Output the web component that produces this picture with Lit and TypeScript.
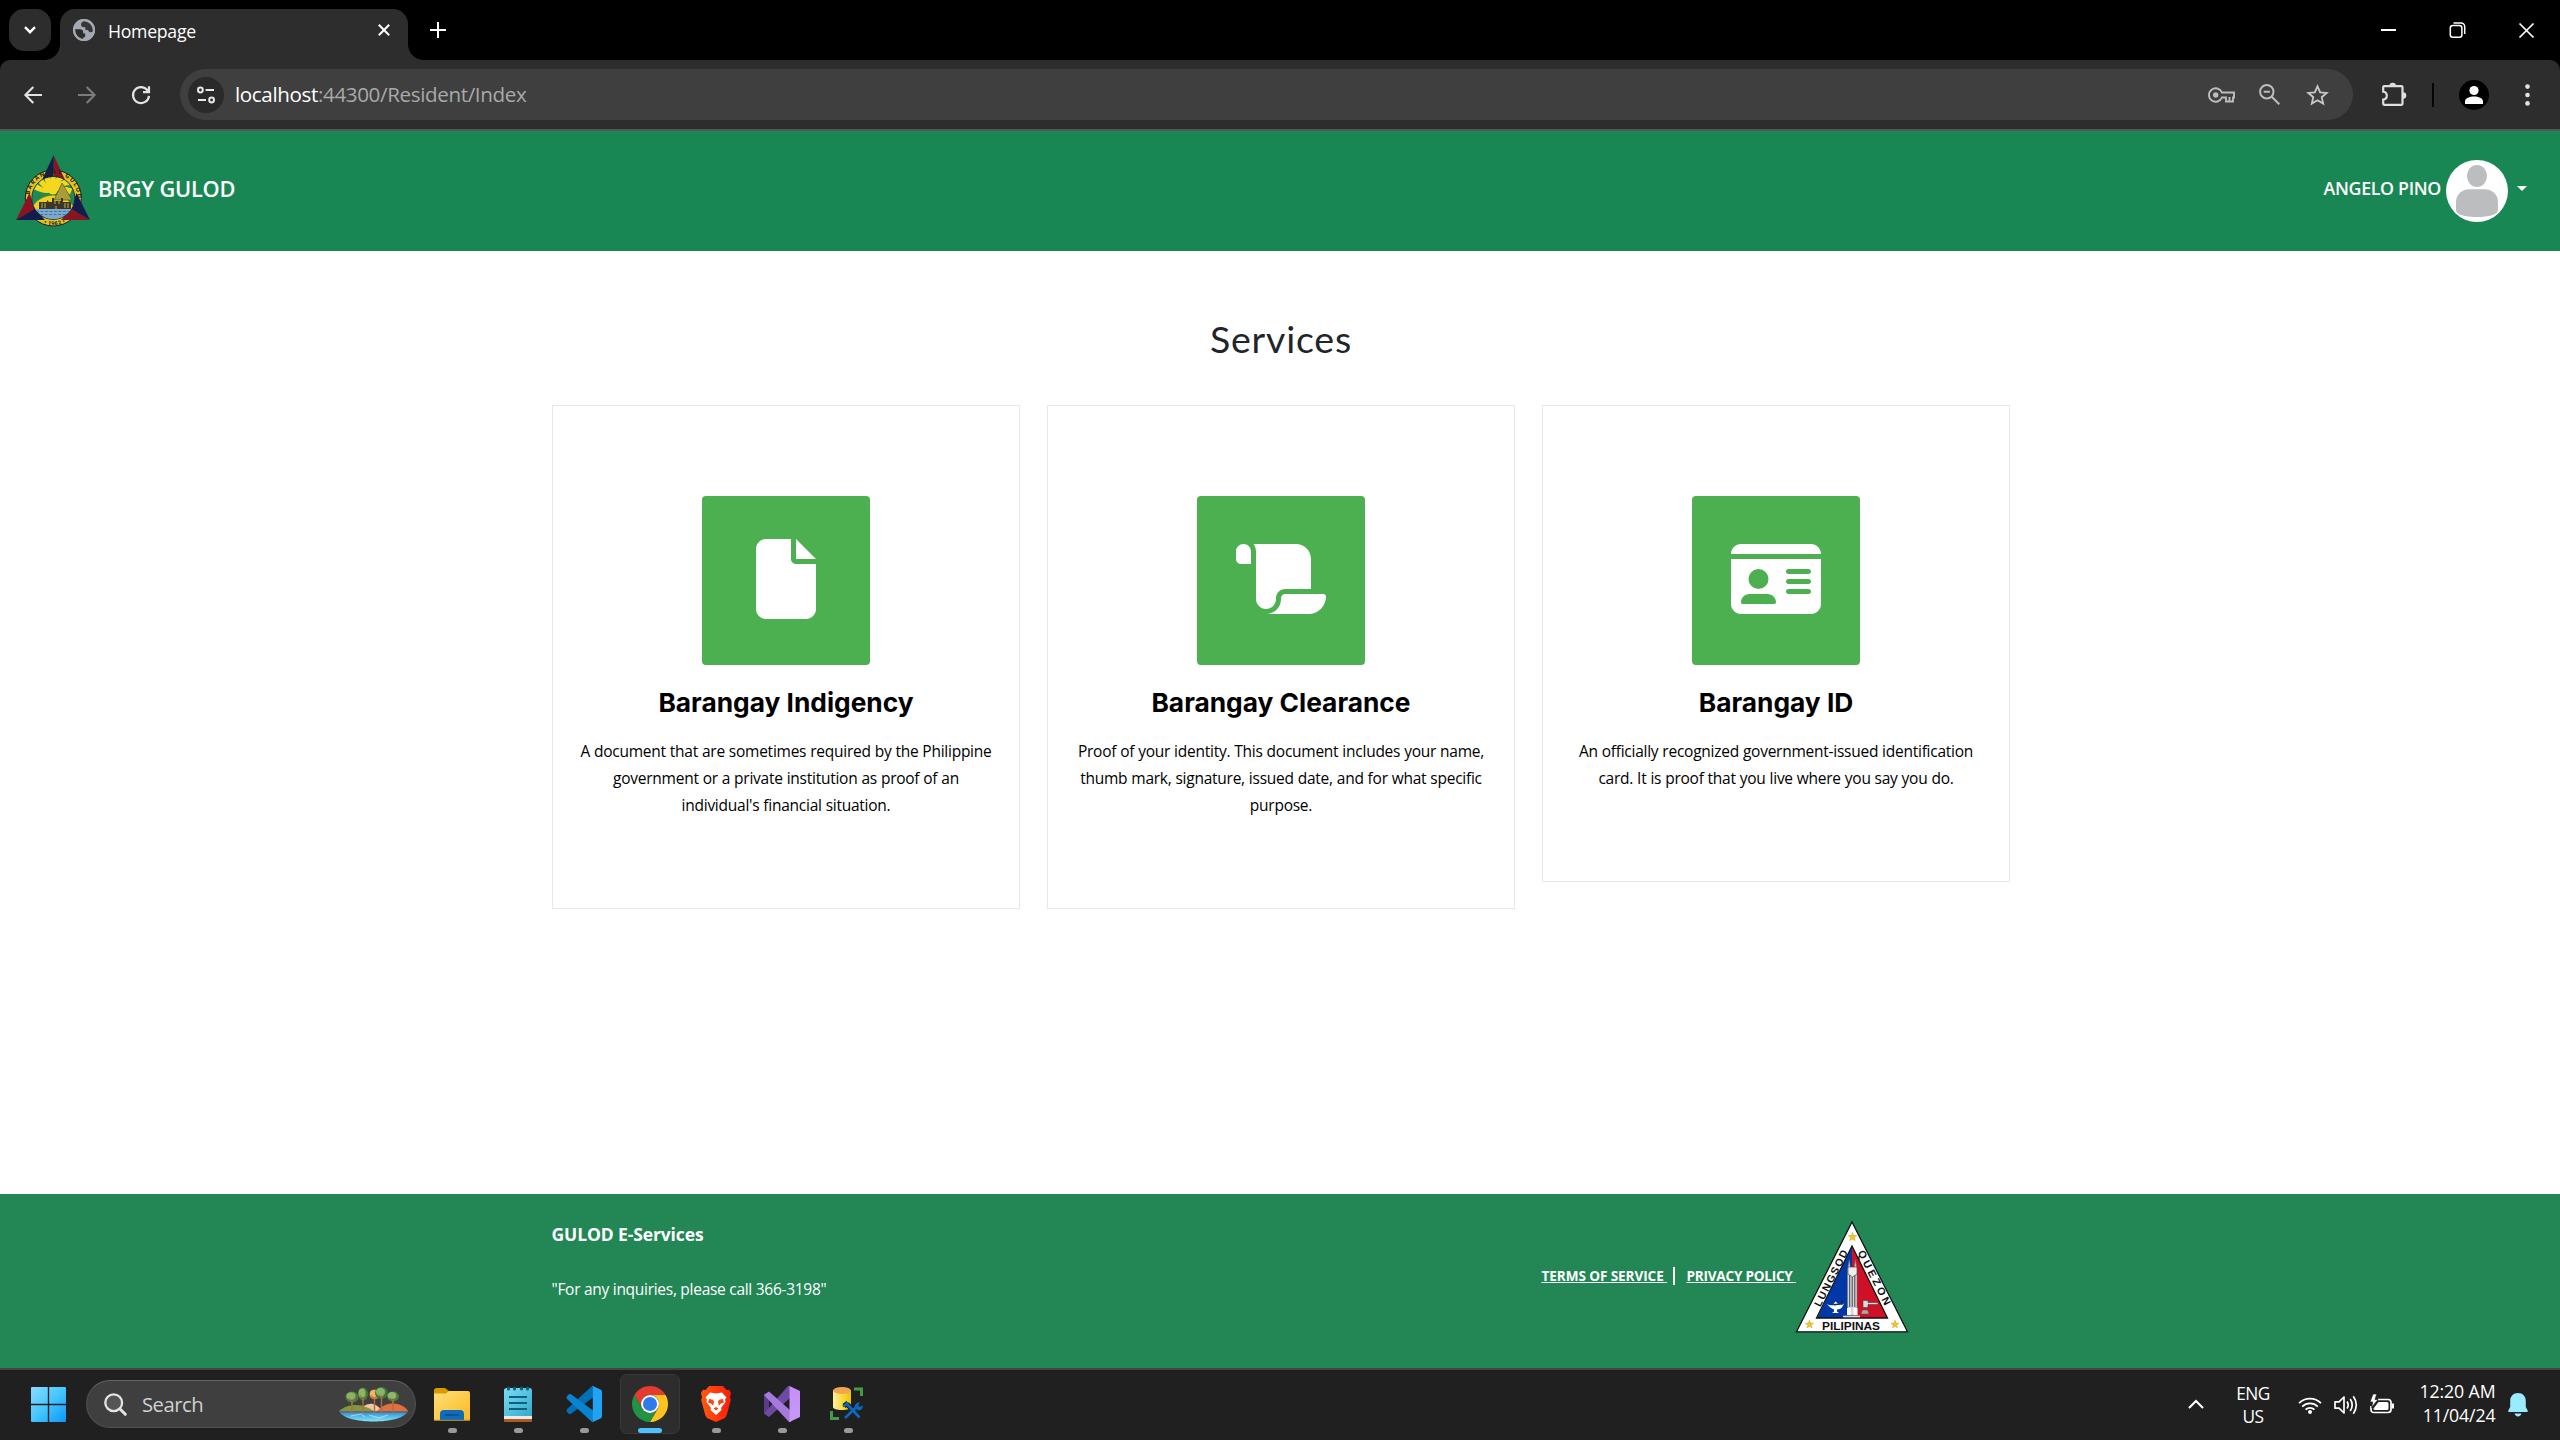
import { LitElement, html, svg, css } from "lit";
import { customElement } from "lit/decorators.js";
import { classMap } from "lit/directives/class-map.js";

interface Service {
  title: string;
  lines: string[];
  iconWidth: number;
  path: string;
}

const SERVICES: Service[] = [
  {
    title: "Barangay Indigency",
    lines: [
      "A document that are sometimes required by the Philippine",
      "government or a private institution as proof of an",
      "individual's financial situation.",
    ],
    iconWidth: 384,
    path: "M0 64C0 28.7 28.7 0 64 0H224V128c0 17.7 14.3 32 32 32H384V448c0 35.3-28.7 64-64 64H64c-35.3 0-64-28.7-64-64V64zm384 64H256V0L384 128z",
  },
  {
    title: "Barangay Clearance",
    lines: [
      "Proof of your identity. This document includes your name,",
      "thumb mark, signature, issued date, and for what specific",
      "purpose.",
    ],
    iconWidth: 576,
    path: "M0 80v48c0 17.7 14.3 32 32 32H48 96V80c0-26.5-21.5-48-48-48S0 53.5 0 80zM112 32c10 13.4 16 30 16 48V384c0 35.3 28.7 64 64 64s64-28.7 64-64v-5.3c0-32.4 26.3-58.7 58.7-58.7H480V128c0-53-43-96-96-96H112zM464 480c61.9 0 112-50.1 112-112c0-8.8-7.2-16-16-16H314.7c-14.7 0-26.7 11.9-26.7 26.7V384c0 53-43 96-96 96H368h96z",
  },
  {
    title: "Barangay ID",
    lines: [
      "An officially recognized government-issued identification",
      "card. It is proof that you live where you say you do.",
    ],
    iconWidth: 576,
    path: "M0 96l576 0c0-35.3-28.7-64-64-64H64C28.7 32 0 60.7 0 96zm0 32V416c0 35.3 28.7 64 64 64H512c35.3 0 64-28.7 64-64V128H0zM64 405.3c0-29.5 23.9-53.3 53.3-53.3H234.7c29.5 0 53.3 23.9 53.3 53.3c0 5.9-4.8 10.7-10.7 10.7H74.7c-5.9 0-10.7-4.8-10.7-10.7zM176 192a64 64 0 1 1 0 128 64 64 0 1 1 0-128zm176 16c0-8.8 7.2-16 16-16H496c8.8 0 16 7.2 16 16s-7.2 16-16 16H368c-8.8 0-16-7.2-16-16zm0 64c0-8.8 7.2-16 16-16H496c8.8 0 16 7.2 16 16s-7.2 16-16 16H368c-8.8 0-16-7.2-16-16zm0 64c0-8.8 7.2-16 16-16H496c8.8 0 16 7.2 16 16s-7.2 16-16 16H368c-8.8 0-16-7.2-16-16z",
  },
];

const STAR = "M0-10 2.6-3.2 9.5-3.1 4 1.3 5.9 8.1 0 4.2-5.9 8.1-4 1.3-9.5-3.1-2.6-3.2z";

/* ---------- Browser window frame ---------- */

@customElement("browser-chrome")
class BrowserChrome extends LitElement {
  static styles = css`
    :host { display: block; background: #000; font-family: "Open Sans", "Noto Sans", sans-serif; }
    svg { display: block; flex: none; overflow: visible; }
    .strip { height: 60px; display: flex; align-items: flex-start; padding-left: 9px; }
    .drop { width: 42px; height: 42px; margin: 9px 9px 0 0; border-radius: 15px; background: #2d2d2d; display: grid; place-items: center; }
    .tab { position: relative; box-sizing: border-box; width: 348px; height: 51px; margin-top: 9px; border-radius: 15px 15px 0 0; background: #2d2d2d; display: flex; align-items: center; padding: 0 18px 9px 13px; }
    .tab::before, .tab::after { content: ""; position: absolute; bottom: 0; width: 15px; height: 15px; }
    .tab::before { left: -15px; background: radial-gradient(circle at 0 0, transparent 14.5px, #2d2d2d 15px); }
    .tab::after { right: -15px; background: radial-gradient(circle at 100% 0, transparent 14.5px, #2d2d2d 15px); }
    .title { flex: 1; margin: 1px 0 0 13px; font-size: 17.7px; line-height: 24px; letter-spacing: -0.29px; color: #fff; }
    .plus { margin: 22px 0 0 21.5px; }
    .window { margin: 0 -1px 0 auto; display: flex; height: 60px; }
    .window span { width: 69px; display: grid; place-items: center; }
    .bar { box-sizing: border-box; height: 71px; border-bottom: 2px solid #555; border-radius: 10px 10px 0 0; background: #2d2d2d; display: flex; align-items: center; padding: 0 24px; }
    .omni { flex: none; box-sizing: border-box; width: 2173px; height: 51px; border-radius: 25.5px; background: #3f3f3f; display: flex; align-items: center; padding: 0 24px 0 7.5px; margin-left: 30px; }
    .info { width: 36px; height: 36px; border-radius: 50%; background: #2a2a2a; display: grid; place-items: center; margin-right: 11.5px; }
    .url { flex: 1; margin-bottom: 2px; font-size: 20.6px; line-height: 30px; letter-spacing: -0.37px; color: #a9a9a9; }
    .url b { font-weight: 400; color: #fff; }
    .gap-36 { margin-left: 36px; }
    .gap-24 { margin-left: 24px; }
    .gap-26 { margin-left: 26px; }
    .ext { margin: 0 0 2px 29px; }
    .sep { width: 2px; height: 24px; background: #050505; margin: 0 25px 0 26px; }
    .dots { margin-left: 36px; }
  `;

  render() {
    return html`
      <div class="strip">
        <div class="drop">
          <svg width="12" height="8" viewBox="0 0 12 8"><path d="M1 1.2l5 5 5-5" fill="none" stroke="#fff" stroke-width="2.4" /></svg>
        </div>
        <div class="tab">
          <svg width="22" height="22" viewBox="0 0 22 22">
            <circle cx="11" cy="11" r="11" fill="#a3a9b2" />
            <path d="M2.2 10.2h4.6c2.2 0 3.4 1 3.4 2.8v1.4h2v2c0 1.5-.8 2.2-2 2.2v1.6C5 20 1.6 15.5 2.2 10.200z" fill="#2d2d2d" />
            <path d="M11.5 2.2c-2 0-3.5 1.5-3.5 3.400 0 2 1.5 2.7 3 2.7h1.4v2.6h2.3l2 2.4 3-.2c1-5.3-2.7-10.2-8.2-10.900z" fill="#2d2d2d" opacity=".92" />
            <circle cx="11" cy="11" r="10" fill="none" stroke="#a3a9b2" stroke-width="2" />
          </svg>
          <span class="title">Homepage</span>
          <svg width="12" height="12" viewBox="0 0 12 12"><path d="M.8.8l10.4 10.4M11.2.8L.8 11.2" stroke="#fff" stroke-width="2" /></svg>
        </div>
        <svg class="plus" width="16" height="16" viewBox="0 0 16 16"><path d="M8 0v16M0 8h16" stroke="#fff" stroke-width="2" /></svg>
        <div class="window">
          <span><svg width="15" height="2"><rect width="15" height="2" fill="#fff" /></svg></span>
          <span>
            <svg width="16" height="16" viewBox="0.5 0 16 16" fill="none" stroke="#fff" stroke-width="1.5">
              <rect x=".8" y="3.6" width="11.6" height="11.6" rx="2.5" />
              <path d="M4 1h7.5A3.8 3.8 0 0 1 15.2 4.8V12" />
            </svg>
          </span>
          <span><svg width="15" height="15" viewBox="0 0 15 15"><path d="M.5.5l14 14M14.5.5l-14 14" stroke="#fff" stroke-width="1.7" /></svg></span>
        </div>
      </div>
      <div class="bar">
        <svg width="18" height="18" viewBox="0 0 18 18" fill="none" stroke="#e3e3e3" stroke-width="2.1"><path d="M18 9H1.6M9.3 1L1.4 9l7.9 8" /></svg>
        <svg class="gap-36" width="18" height="18" viewBox="0 0 18 18" fill="none" stroke="#7c7c7c" stroke-width="2.1"><path d="M0 9h16.4M8.7 1l7.9 8-7.9 8" /></svg>
        <svg class="gap-36" width="18" height="18" viewBox="0 0 18 18" fill="none" stroke="#e3e3e3" stroke-width="2.2"><path d="M15.8 4.8A8 8 0 1 0 17 9.8M17 .2v5.9h-6" /></svg>
        <div class="omni">
          <span class="info">
            <svg width="18" height="18" viewBox="0 0 18 18" fill="none" stroke="#e8e8e8" stroke-width="2"><circle cx="3.4" cy="4" r="2.4" /><path d="M8.6 4H17M1 14h8" /><circle cx="14.6" cy="14" r="2.4" /></svg>
          </span>
          <span class="url"><b>localhost</b>:44300/Resident/Index</span>
          <svg width="27" height="16" viewBox="0 0 27 16" fill="none" stroke="#bdbdbd" stroke-width="1.9">
            <circle cx="7.7" cy="8" r="2.7" fill="#bdbdbd" stroke="none" />
            <path d="M13.9 5.5A6.7 6.7 0 1 0 13.9 10.5H18V14.5H25V10.5H26V5.5zM21.5 14v-4" />
          </svg>
          <svg class="gap-24" width="21" height="21" viewBox="0 0 21 21" fill="none" stroke="#bdbdbd" stroke-width="2"><circle cx="7.8" cy="7.8" r="6.7" /><path d="M12.7 12.7l7.6 7.6M4.7 7.8h6.2" /></svg>
          <svg class="gap-26" width="23" height="22" viewBox="0 0 23 22" fill="none" stroke="#c8c8c8" stroke-width="1.8"><path d="M11.5 2.3l2.7 6 6.5.6-5 4.3 1.5 6.4-5.7-3.4-5.7 3.4 1.5-6.4-5-4.3 6.5-.6z" /></svg>
        </div>
        <svg class="ext" width="24" height="24" viewBox="0 0 24 24">
          <path d="M3 4.2H19.5Q20.5 4.2 20.5 5.2V21.8Q20.5 22.8 19.5 22.8H2.2Q1.2 22.8 1.2 21.8V17.5C6 17.5 6 9.7 1.2 9.7V5.2Q1.2 4.2 2.2 4.2z" fill="none" stroke="#dedede" stroke-width="2.2" />
          <path d="M7.4 4a3.3 3.3 0 0 1 6.6 0zM21 10.2a3.3 3.3 0 0 1 0 6.6z" fill="#dedede" />
        </svg>
        <span class="sep"></span>
        <svg width="30" height="30" viewBox="0 0 30 30"><circle cx="15" cy="15" r="15" fill="#000" /><circle cx="15" cy="10.5" r="4.6" fill="#fff" /><path d="M6 24v-2.5c0-3.5 4.5-5 9-5s9 1.5 9 5V24z" fill="#fff" /></svg>
        <svg class="dots" width="5" height="22" viewBox="0 0 5 22" fill="#e3e3e3"><circle cx="2.5" cy="2.6" r="2.3" /><circle cx="2.5" cy="11" r="2.3" /><circle cx="2.5" cy="19.4" r="2.3" /></svg>
      </div>
    `;
  }
}

/* ---------- Web page ---------- */

@customElement("service-card")
class ServiceCard extends LitElement {
  static properties = { service: { attribute: false } };
  declare service: Service;

  static styles = css`
    :host { display: block; box-sizing: border-box; width: 468px; border: 1px solid #e8e8e8; padding: 90px 0 89px; text-align: center; }
    .icon { width: 168px; height: 169px; margin: 0 auto; border-radius: 4px; background: #4caf50; display: grid; place-items: center; }
    .icon svg { display: block; height: 80px; margin-bottom: 3px; }
    h2 { margin: 23px 0 20px; font: 700 26.3px/30px Inter, sans-serif; color: #000; }
    p { margin: 0; font: 400 15.5px/27px "Open Sans", "Noto Sans", sans-serif; letter-spacing: -0.25px; word-spacing: 0.2px; color: #000; }
    span { display: block; white-space: nowrap; }
  `;

  render() {
    const s = this.service;
    return html`
      <div class="icon">
        <svg width=${(s.iconWidth * 80) / 512} viewBox="0 0 ${s.iconWidth} 512"><path d=${s.path} fill="#fff" /></svg>
      </div>
      <h2>${s.title}</h2>
      <p>${s.lines.map((line) => html`<span>${line}</span>`)}</p>
    `;
  }
}

@customElement("resident-page")
class ResidentPage extends LitElement {
  static styles = css`
    :host { display: flex; flex-direction: column; background: #fff; font-family: "Open Sans", "Noto Sans", sans-serif; }
    svg { display: block; flex: none; overflow: visible; }
    header { flex: none; height: 120px; background: #198754; display: flex; align-items: center; padding: 0 32px 0 16px; color: #fff; }
    .brand { margin: 0 0 5px 8px; font-size: 21.8px; line-height: 30px; font-weight: 600; letter-spacing: -0.25px; }
    .user { margin: 0 5px 6px auto; font-size: 17.8px; line-height: 24px; font-weight: 600; letter-spacing: -0.33px; }
    .caret { margin: 0 1px 5px 9px; }
    main { flex: 1; padding: 66px 0 0 552px; width: 1458px; }
    h1 { margin: 0 0 44px; text-align: center; font: 400 37.5px/44px Lato, sans-serif; letter-spacing: 0.8px; color: #212529; }
    .cards { display: flex; align-items: flex-start; gap: 27px; }
    footer { flex: none; box-sizing: border-box; height: 174px; background: #228655; color: #fff; display: flex; padding: 27px 0 0 551.5px; }
    .contact { width: 990px; padding-top: 1px; }
    .contact h3 { margin: 0 0 31px; font-size: 17.5px; line-height: 24px; font-weight: 700; letter-spacing: -0.12px; }
    .contact p { margin: 0; font-size: 15.5px; line-height: 24px; letter-spacing: -0.28px; }
    .legal { display: flex; align-items: center; height: 112px; }
    .link { box-sizing: border-box; font-size: 13.6px; line-height: 24px; font-weight: 700; letter-spacing: -0.1px; margin-bottom: 2px; text-decoration: underline; text-decoration-thickness: 1px; text-underline-offset: 1px; white-space: pre; }
    .terms { width: 125px; }
    .privacy { width: 109.5px; letter-spacing: -0.25px; }
    .rule { width: 2px; height: 18px; background: #fff; margin: 0 11.5px 2px 6.5px; }
  `;

  private seal() {
    const rays = [-100, -70, -40, -12, 16, 44, 74];
    return svg`
      <svg width="74" height="73" viewBox="0 0 74 73">
        <defs><path id="arc-top" d="M13.5 43a24 24 0 0 1 48 0" /><path id="arc-low" d="M10 43a27.3 27.3 0 0 0 54.6 0" /><clipPath id="disc"><circle cx="37.3" cy="43" r="21" /></clipPath></defs>
        <circle cx="37.3" cy="43" r="28" fill="#e6c41e" stroke="#14204a" stroke-width="1" />
        <path d="M37.600 0L50 27 37.600 22z" fill="#8c1422" />
        <path d="M37.600 0L25 27l12.600-5z" fill="#141b4d" />
        <path d="M0 65L13.500 38l6 17z" fill="#8c1422" /><path d="M0 65l19-11 10 11z" fill="#141b4d" />
        <path d="M74 65L60.500 38l-6 16z" fill="#141b4d" /><path d="M74 65L55 54 45 65z" fill="#8c1422" />
        <circle cx="37.3" cy="43" r="21.5" fill="#1f8a53" stroke="#14204a" stroke-width=".8" />
        <g clip-path="url(#disc)">
          <g fill="#f5d720">
            ${rays.map((a) => svg`<path d="M-2 0C-3-7-1-12 4-19L9-15C4-11 2-6 2 0z" transform="translate(37 35) rotate(${a})" />`)}
            <circle cx="37" cy="35" r="4.600" />
          </g>
          <path d="M14 56C19 44 32 38 43 41l8 3 9 10z" fill="#f0cf22" stroke="#86761f" stroke-width=".5" />
          <path d="M46 28l10 17H38z" fill="#a99c3a" stroke="#4d4a22" stroke-width=".6" />
          <path d="M23 47h8v-2l2 2h3v-4h2v3h7v-3h2v4h8v7H23z" fill="#3c3626" />
          <path d="M26 48v5M29 48v5M39 46v3M43 46v3M40 51v4M49 48v5M52 48v5" stroke="#c0a94a" stroke-width="1" />
          <path d="M15 54h45v12H15z" fill="#7ba9cf" />
          <path d="M20 56.500h35M24 59.500h27" stroke="#35679c" stroke-width=".8" stroke-dasharray="3 1.500" />
        </g>
        <text font-size="6" font-weight="700" fill="#2a2415" letter-spacing="1.200"><textPath href="#arc-top" startOffset="3">BARANGAY GULOD</textPath></text>
        <text font-size="5.500" font-weight="700" fill="#2a2415" letter-spacing=".4"><textPath href="#arc-low" startOffset="33">• 1962 •</textPath></text>
      </svg>`;
  }

  private cityLogo() {
    return svg`
      <svg width="112" height="112" viewBox="0 0 112 112" font-family="Liberation Sans, sans-serif" font-weight="700" fill="#111">
        <path d="M56 1L111.500 110.800H.5z" fill="#fff" stroke="#111" stroke-width="1.300" />
        <path d="M56 25v72H21z" fill="#0038a8" /><path d="M56 25v72h35.500z" fill="#ce1126" />
        <path d="M56 25L91.500 97h-71z" fill="none" stroke="#111" stroke-width="1.300" />
        <path d="M51.500 94V49l1.800-10 1 8h4l1-8 1.700 10v45z" fill="#d7d7da" stroke="#777" stroke-width=".6" />
        <path d="M53.700 50v36M56.200 56v30M58.800 50v36" stroke="#33363f" stroke-width=".9" />
        <path d="M52 46h9v7l-4.500 3L52 53z" fill="#eee" stroke="#333" stroke-width=".6" />
        <path d="M51 87h4v7h-4zM57.500 87h4v7h-4z" fill="#fff" /><path d="M47 95.500h17" stroke="#ddd" stroke-width="1.600" />
        <path d="M31 83c3 2 5 1 8 1.500 4-1 6 0 9-2l-1 2c-1 3-4 4-6 4v2l2 1.500h-7l2-1.500v-2c-3-1-5-3-7-5.500z" fill="#fff" />
        <path d="M37 83l2.500-3 3 3z" fill="#fff" stroke="#111" stroke-width=".5" /><path d="M46 79v5" stroke="#222" stroke-width="1" />
        <path d="M67 79.500h5v2h10v2H72v3h-5z" fill="#d9d9d9" stroke="#333" stroke-width=".5" />
        <path d="M66.500 89h5l1.500 4h-8z" fill="#aaa" stroke="#555" stroke-width=".5" />
        <g fill="#f5c518" stroke="#a8872a" stroke-width=".7">
          <path d=${STAR} transform="translate(56.500 16) scale(.46)" /><path d=${STAR} transform="translate(13.500 103.500) scale(.44)" /><path d=${STAR} transform="translate(99 103.500) scale(.44)" />
        </g>
        <text font-size="10.600" transform="translate(24.200 86.500) rotate(-63)" textLength="62">LUNGSOD</text>
        <text font-size="10.600" transform="translate(61.500 31.500) rotate(63)" textLength="60">QUEZON</text>
        <text font-size="11.200" x="26" y="108.700" textLength="58" lengthAdjust="spacingAndGlyphs">PILIPINAS</text>
      </svg>`;
  }

  render() {
    return html`
      <header>
        ${this.seal()}
        <span class="brand">BRGY GULOD</span>
        <span class="user">ANGELO PINO</span>
        <svg width="62" height="62" viewBox="0 0 62 62"><circle cx="31" cy="31" r="31" fill="#fff" /><ellipse cx="31" cy="16" rx="10" ry="11" fill="#bbbdbf" /><path d="M10 50V42c0-8 7-12.7 13-12.7h16c6 0 13 4.7 13 12.7v8c0 4.5-9 7-21 7s-21-2.5-21-7z" fill="#bbbdbf" /></svg>
        <svg class="caret" width="10" height="5" viewBox="0 0 10 5"><path d="M0 0h10L5 5z" fill="#fff" /></svg>
      </header>
      <main>
        <h1>Services</h1>
        <div class="cards">${SERVICES.map((s) => html`<service-card .service=${s}></service-card>`)}</div>
      </main>
      <footer>
        <div class="contact">
          <h3>GULOD E-Services</h3>
          <p>"For any inquiries, please call 366-3198"</p>
        </div>
        <div class="legal">
          <span class="link terms">TERMS OF SERVICE </span>
          <span class="rule"></span>
          <span class="link privacy">PRIVACY POLICY </span>
          ${this.cityLogo()}
        </div>
      </footer>
    `;
  }
}

/* ---------- Taskbar ---------- */

const tree = (x: number, y: number, rx: number, ry: number, leaf: string, shade: string) => svg`
  <path d="M${x} ${y}V26" stroke="#b06b42" stroke-width="1.4" />
  <ellipse cx=${x} cy=${y} rx=${rx} ry=${ry} fill=${shade} />
  <ellipse cx=${x - 1} cy=${y - 1} rx=${rx * 0.7} ry=${ry * 0.7} fill=${leaf} />
  <path d="M${x - 3} ${y + 1}l3 4 3-4M${x} ${y + 5}V${y + 8}" stroke="#b06b42" stroke-width="1" fill="none" />`;

const APPS = [
  { active: false, icon: svg`
    <path d="M0 4.500Q0 2 2.500 2H11l4 3v6H0z" fill="#d99a00" /><path d="M0 7.500h12L15 5h19q2 0 2 2v27.500H0z" fill="url(#folder)" />
    <path d="M6 34.500V28q0-4 4-4h16q4 0 4 4v6.500z" fill="#0f6cbd" /><path d="M11 29h14" stroke="#0a4a86" stroke-width="1.600" /><path d="M0 34.300h36" stroke="#b98a1a" stroke-width="1" />` },
  { active: false, icon: svg`
    <rect x="4" y="31" width="28" height="5" rx="1" fill="#b1591b" /><rect x="4" y="28" width="28" height="5" fill="#e9e9ee" />
    <path d="M4 4.500Q4 2 6.500 2h23Q32 2 32 4.500V30H4z" fill="url(#note)" />
    <g fill="#0c5f7d"><rect x="7" y=".5" width="3" height="4" rx="1.500" /><rect x="13" y=".5" width="3" height="4" rx="1.500" /><rect x="20" y=".5" width="3" height="4" rx="1.500" /><rect x="26" y=".5" width="3" height="4" rx="1.500" /></g>
    <path d="M9 11h18M9 17h18M9 23h18" stroke="#0c6180" stroke-width="2" />` },
  { active: false, icon: svg`<g transform="scale(.36)">
    <path d="M3 64L70 2l6 4v25L14 77q-3 2-6 0l-5-5q-3-4 0-8z" fill="#0070b8" />
    <path d="M3 36L70 98l6-4V69L14 23q-3-2-6 0l-5 5q-3 4 0 8z" fill="#0a84d0" />
    <path d="M69.500 1.500q3-2.500 6.500-1l20 9.500q4 2 4 6v68q0 4-4 6l-20 9.500q-4 1.500-6.500-1 5 1 5-4V5.500q0-5-5-4z" fill="#22a2f2" /></g>` },
  { active: true, icon: svg`<g transform="scale(.75)">
    <path d="M24 12H44.780A24 24 0 0 0 3.220 12L13.600 30A12 12 0 0 1 24 12z" fill="#e33b2e" />
    <path d="M44.780 12A24 24 0 0 1 24 48L34.400 30A12 12 0 0 0 24 12z" fill="#fcc31e" />
    <path d="M3.220 12A24 24 0 0 0 24 48L34.400 30A12 12 0 0 1 13.600 30z" fill="#229342" />
    <circle cx="24" cy="24" r="12" fill="#fff" /><circle cx="24" cy="24" r="9.400" fill="#2f7bee" /></g>` },
  { active: false, icon: svg`
    <path d="M11 0h14l3.500 4 2.500-.3L33 7l-1 4 .8 3-4 15q-.6 2-2.300 3.200L18 36l-8.500-3.800Q7.800 31 7.200 29L3.200 14l.8-3-1-4 2-3.300 2.500.3z" fill="url(#brave)" />
    <path d="M12 6.500l6 1 6-1 4.500 5-1.500 2 .5 2.500-4.500 6 .5 2-5.500 5-5.500-5 .5-2-4.500-6 .5-2.500-1.500-2z" fill="#fff" />
    <path d="M11 13l4 .8 1 2-.8 4-2.200-2.200-3-1zM25 13l-4 .8-1 2 .8 4 2.200-2.200 3-1zM15.500 22.500L18 21l2.500 1.500L18 24.500z" fill="#fb4314" />` },
  { active: false, icon: svg`
    <path d="M0 8l5-2v24l-5-3z" fill="#5b3b8c" /><path d="M5 31L0 27.500 24 0h2v12z" fill="#6e4ba3" />
    <path d="M0 9l5-3.500L27 25v11h-2z" fill="#a779dd" /><path d="M25.500 0L36 5v26l-10.500 5V12z" fill="url(#vs)" />` },
  { active: false, icon: svg`
    <path d="M3 4v17c0 1.800 4 3 9 3s9-1.200 9-3V4z" fill="url(#db)" /><ellipse cx="12" cy="4.500" rx="9" ry="3.500" fill="#f0a64e" />
    <path d="M24 3h7.500v7M1.500 25v7.500H9" fill="none" stroke="#459b45" stroke-width="3" />
    <g fill="none" stroke="#202020" stroke-width="5"><path d="M14 20l4-3M17 18l12 13M15.500 31.500L26 21" /></g>
    <path d="M13 20.500l5-3.500M17.500 18.500l12 13M15 32L27 20.500" fill="none" stroke="#0b6ac0" stroke-width="2.600" />
    <path d="M25 22.500q-1.500-4 3-6l1.800-.3-1.600 3.300 1.600 1.500 3-1.800q.3 4.800-4 5.300z" fill="#0b6ac0" />` },
];

@customElement("task-bar")
class TaskBar extends LitElement {
  static styles = css`
    :host { box-sizing: border-box; height: 72px; border-top: 2px solid #444; background: #202020; display: flex; align-items: center; padding: 0 32px 0 31px; color: #fff; font-family: "Open Sans", "Noto Sans", sans-serif; }
    svg { display: block; flex: none; overflow: visible; }
    .search { box-sizing: border-box; width: 330px; height: 48px; margin: 0 6px 2px 19px; border-radius: 24px; border: 1.5px solid #505050; border-top-color: #636363; background: #3f3f3f; display: flex; align-items: center; padding: 0 7px 0 17px; }
    .search span { flex: 1; margin: 0 0 0 15px; font-size: 20.3px; line-height: 30px; letter-spacing: -0.5px; color: #d0d0d0; }
    .apps { display: flex; gap: 6px; margin-bottom: 2px; }
    .app { box-sizing: border-box; width: 60px; height: 60px; border: 1.5px solid transparent; border-radius: 7px; padding-top: 10.5px; display: flex; flex-direction: column; align-items: center; justify-content: space-between; }
    .app.active { background: #2d2d2d; border-color: #383838; }
    .dot { width: 9px; height: 5px; border-radius: 2.5px; background: #9a9a9a; }
    .active .dot { width: 24px; background: #4cc2ff; }
    .up { margin: 0 31px 2px auto; }
    .lang { width: 36px; text-align: center; font-size: 17.3px; line-height: 23px; letter-spacing: -0.6px; margin-right: 27px; }
    .tray { display: flex; align-items: center; gap: 12px; margin-right: 24px; }
    .clock { width: 78px; text-align: right; font-size: 17.7px; line-height: 24px; letter-spacing: -0.1px; margin: 0 12.5px 4px -0.5px; white-space: nowrap; }
  `;

  render() {
    return html`
      <svg width="36" height="36" viewBox="0 0 36 36">
        <defs>
          <linearGradient id="win" gradientUnits="userSpaceOnUse" x1="0" y1="0" x2="35" y2="35"><stop offset="0" stop-color="#8adcff" /><stop offset=".5" stop-color="#45c6ff" /><stop offset="1" stop-color="#0a96fa" /></linearGradient>
        </defs>
        <path d="M1 0h15.800v16.800H0V1q0-1 1-1zM18.200 0H34q1 0 1 1v15.800H18.200zM0 18.200h16.800V35H1q-1 0-1-1zM18.200 18.200H35V34q0 1-1 1H18.200z" fill="url(#win)" />
      </svg>
      <div class="search">
        <svg width="23" height="23" viewBox="0 0 23 23" fill="none" stroke="#e4e4e8"><circle cx="9.7" cy="9.7" r="8.4" fill="#555" stroke-width="2.3" /><path d="M16 16l5.3 5.3" stroke-width="3" stroke-linecap="round" /></svg>
        <span>Search</span>
        <svg width="69" height="35" viewBox="0 0 69 35">
          <defs><linearGradient id="sea" x1="0" y1="0" x2="0" y2="1"><stop offset="0" stop-color="#2b7fc0" /><stop offset=".5" stop-color="#4db9ee" /><stop offset="1" stop-color="#8be3e6" /></linearGradient></defs>
          <path d="M0 24h69c-3 7-18 10.500-34.500 10.500S3 31 0 24z" fill="url(#sea)" />
          <path d="M20 24c3-5 9-8 14-7 5 1 9 7 12 7z" fill="#f6c6a0" /><path d="M38 24c4-5 10-7.500 16-7.500S67 20 69 24z" fill="#e0713a" />
          <path d="M0 24c5-4 10-6 17-6s13 3 18 6z" fill="#7f9a3c" /><path d="M1 25h67" stroke="#a5483a" stroke-width="1.500" opacity=".7" />
          <path d="M12 29l10-2 4 3M30 28l10 3 9-3" stroke="#e4fbff" stroke-width=".8" fill="none" opacity=".7" />
          ${tree(13, 10, 6.5, 5.5, "#8db265", "#4f7b3d")}${tree(24, 7, 5, 6.5, "#8bb763", "#487a3a")}
          ${tree(35.5, 7.5, 5, 5, "#f3b65e", "#c98a38")}${tree(42.5, 6, 6.5, 6, "#86b564", "#3f7537")}${tree(54, 9.5, 6, 5, "#8fb868", "#4c7d3e")}
        </svg>
      </div>
      <div class="apps">
        ${APPS.map((app) => html`
          <div class=${classMap({ app: true, active: app.active })}>
            <svg width="36" height="36" viewBox="0 0 36 36">
              <defs>
                <linearGradient id="folder" x1="0" y1="0" x2="1" y2="1"><stop offset="0" stop-color="#ffdf7a" /><stop offset="1" stop-color="#fbb91f" /></linearGradient>
                <linearGradient id="note" x1="0" y1="0" x2="1" y2="1"><stop offset="0" stop-color="#7ddcf5" /><stop offset="1" stop-color="#33a9c9" /></linearGradient>
                <linearGradient id="brave" x1="0" y1="0" x2="1" y2="0"><stop offset="0" stop-color="#ff5a0e" /><stop offset="1" stop-color="#fb1b0c" /></linearGradient>
                <linearGradient id="vs" x1="0" y1="0" x2="0" y2="1"><stop offset="0" stop-color="#c98cfb" /><stop offset="1" stop-color="#c39bf5" /></linearGradient>
                <linearGradient id="db" x1="0" y1="0" x2="1" y2="0"><stop offset="0" stop-color="#fff0a0" /><stop offset=".6" stop-color="#f7d830" /><stop offset="1" stop-color="#eebf10" /></linearGradient>
              </defs>
              ${app.icon}
            </svg>
            <span class="dot"></span>
          </div>`)}
      </div>
      <svg class="up" width="16" height="9" viewBox="0 0 16 9"><path d="M1 8l7-7 7 7" fill="none" stroke="#fff" stroke-width="2" /></svg>
      <div class="lang">ENG<br />US</div>
      <div class="tray">
        <svg width="24" height="18" viewBox="0 0 24 18" fill="none" stroke="#fff" stroke-width="1.7">
          <path d="M1 7.200a15.500 15.500 0 0 1 22 0M4.200 10.600a11 11 0 0 1 15.600 0M7.500 13.700a6.400 6.400 0 0 1 9 0" /><circle cx="12" cy="16" r="2" fill="#fff" stroke="none" />
        </svg>
        <svg width="24" height="20" viewBox="0 0 24 20" fill="none" stroke="#fff" stroke-width="1.7">
          <path d="M1 6.800h4L10 2v16L5 13.200H1z" stroke-linejoin="round" /><path d="M13 6.500q2.400 3.500 0 7M16.200 4q4 6 0 12M19.300 1.300q6 8.700 0 17.400" />
        </svg>
        <svg width="24" height="20" viewBox="0 0 24 20">
          <path d="M8 4.500h10q3 0 3 3v7q0 3-3 3H4q-3 0-3-3V11" fill="none" stroke="#fff" stroke-width="1.700" /><path d="M8.500 7H17q1.500 0 1.500 1.500v5Q18.500 15 17 15H5q-1.500 0-1.500-1.500z" fill="#fff" />
          <path d="M21.500 8.500h2.500v5h-2.500z" fill="#fff" /><path d="M3-1L0 7h2.800L1.500 12.500 8 4.500H5L6.800-1z" fill="#fff" stroke="#202020" stroke-width=".7" />
        </svg>
      </div>
      <div class="clock">12:20 AM<br />11/04/24</div>
      <svg width="20" height="24" viewBox="0 0 20 24" fill="#99ebff"><path d="M10 0C5.300 0 2.200 3.500 2.200 8v6L.3 17.500Q0 19 1 19h18q1 0 .7-1.500L17.800 14V8C17.800 3.500 14.700 0 10 0zM6.500 20.500h7Q12.500 23.500 10 23.500t-3.500-3z" /></svg>
    `;
  }
}

@customElement("app-root")
class AppRoot extends LitElement {
  static styles = css`
    :host { display: flex; flex-direction: column; width: 2560px; height: 1440px; overflow: hidden; }
    resident-page { flex: 1; }
  `;

  render() {
    return html`<browser-chrome></browser-chrome><resident-page></resident-page><task-bar></task-bar>`;
  }
}
